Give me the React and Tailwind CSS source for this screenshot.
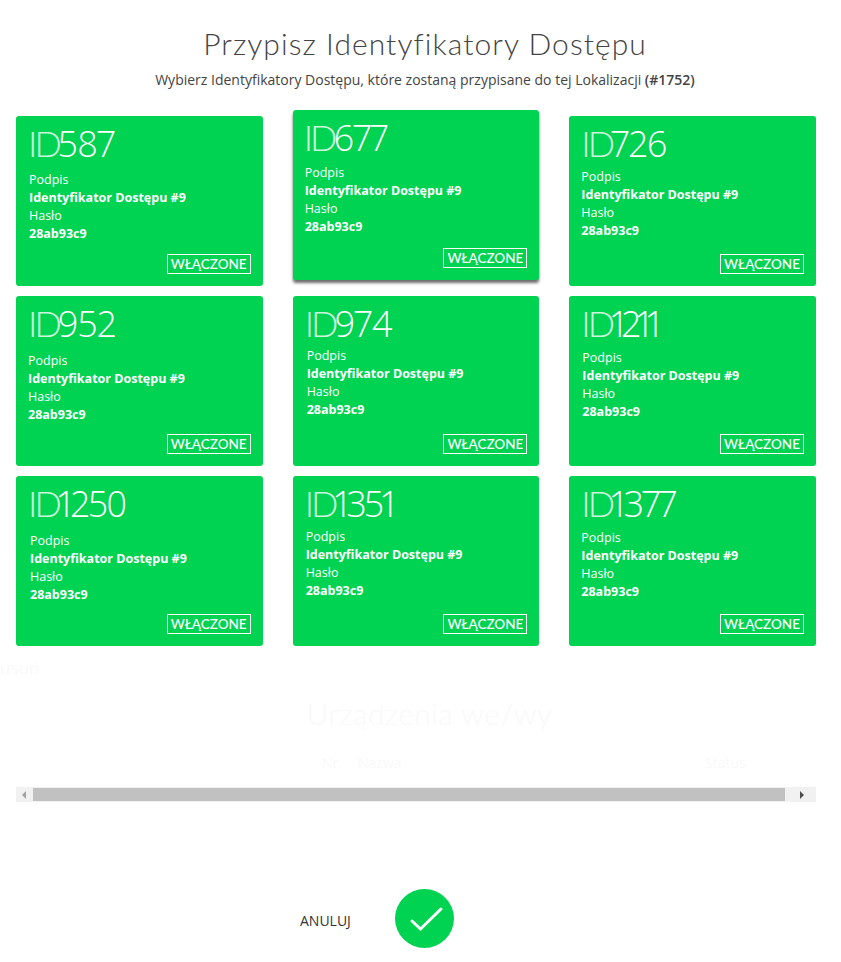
import React from "react";

const cards = [
  { id: "587", bodyCls: "mt-[6px] ml-0", lift: false, numCls: "tracking-[-0.6px]" },
  { id: "677", bodyCls: "mt-[5px] ml-0", lift: true, numCls: "tracking-[-0.8px]" },
  { id: "726", bodyCls: "mt-[3px] -ml-px", lift: false, numCls: "tracking-[-0.8px]" },
  { id: "952", bodyCls: "mt-[7px] -ml-px", lift: false, numCls: "tracking-[-0.4px]" },
  { id: "974", bodyCls: "mt-[2px] ml-px", lift: false, numCls: "tracking-[-0.6px]" },
  { id: "1211", bodyCls: "mt-[4px] ml-0", lift: false, numCls: "tracking-[-4px]" },
  { id: "1250", bodyCls: "mt-[7px] ml-px", lift: false, numCls: "tracking-[-1.6px]" },
  { id: "1351", bodyCls: "mt-[3px] ml-0", lift: false, numCls: "tracking-[-2px]" },
  { id: "1377", bodyCls: "mt-[4px] -ml-px", lift: false, numCls: "tracking-[-1.4px]" },
];

function Card({ id, bodyCls, lift, numCls }) {
  return (
    <div
      className={
        lift
          ? "relative h-[170px] -translate-y-1.5 rounded-[3px] bg-[#00d252] pl-[12px] pt-[5px] text-white shadow-[0_3px_3px_rgba(60,60,60,0.75)]"
          : "relative h-[170px] rounded-[3px] bg-[#00d252] pl-[13px] pt-[5px] text-white"
      }
    >
      <div className="h-[44px] font-['Open_Sans',sans-serif] text-[36px] leading-[44px] font-light proportional-nums">
        <span className="-ml-px inline-block w-[30px] font-['Lato',sans-serif] font-light tracking-[-3px] text-white/80">ID</span>
        <span className={numCls}>{id}</span>
      </div>
      <div className={`font-['Open_Sans',sans-serif] text-[12.5px] leading-[18px] ${bodyCls}`}>
        <div>Podpis</div>
        <div className="font-bold">Identyfikator Dostępu #9</div>
        <div>Hasło</div>
        <div className="font-bold">28ab93c9</div>
      </div>
      <div className="absolute right-3 bottom-3 flex h-5 w-[84px] items-center justify-center border border-white pt-px font-['Lato',sans-serif] text-[13.5px] font-medium">
        WŁĄCZONE
      </div>
    </div>
  );
}

export default function App() {
  return (
    <div className="h-[962px] w-[841px] overflow-hidden bg-white font-['Open_Sans',sans-serif] text-[#333]">
      <header className="flex h-[116px] w-[850px] flex-col items-center pt-[22px]">
        <h1 className="h-[42px] font-['Lato',sans-serif] text-[30px] leading-[42px] font-light tracking-[1.05px] text-[#444]">
          Przypisz Identyfikatory Dostępu
        </h1>
        <p className="mt-[6px] text-[14px] leading-[20px] text-[#444]">
          Wybierz Identyfikatory Dostępu, które zostaną przypisane do tej Lokalizacji <strong className="font-semibold">(#1752)</strong>
        </p>
      </header>

      <main className="ml-4 grid w-[800px] grid-cols-3 gap-x-[30px] gap-y-[10px]">
        {cards.map((c) => (
          <Card key={c.id} {...c} />
        ))}
      </main>

      <section className="text-[#f9f9f9]">
        <div className="mt-[12px] h-[20px] text-[17px] leading-[20px]">usuń</div>
        <h2 className="mt-[15px] ml-[18px] h-[40px] text-center font-['Lato',sans-serif] text-[30px] leading-[40px] font-light tracking-[0.4px]">
          Urządzenia we/wy
        </h2>
        <div className="mt-[20px] flex h-[20px] pl-[322px] text-[14px] leading-[20px]">
          <span className="w-[36px]">Nr</span>
          <span className="w-[347px]">Nazwa</span>
          <span>Status</span>
        </div>
      </section>

      <div className="mt-[14px] ml-4 flex h-[15px] w-[800px] items-center bg-[#f1f1f1]">
        <div className="flex h-full w-[17px] items-center justify-center">
          <svg width="5" height="8" viewBox="0 0 5 8"><path d="M4 0v8L0 4z" fill="#a3a3a3" /></svg>
        </div>
        <div className="h-[13px] w-[752px] bg-[#c1c1c1]" />
        <div className="flex h-full flex-1 items-center justify-center pl-px">
          <svg width="5" height="8" viewBox="0 0 5 8"><path d="M1 0v8l4-4z" fill="#505050" /></svg>
        </div>
      </div>

      <footer className="mt-[87px] ml-[300px] flex items-center">
        <span className="mt-[5px] w-[95px] text-[14px] leading-[20px] text-[#333]">ANULUJ</span>
        <button className="flex h-[59px] w-[59px] items-center justify-center rounded-full bg-[#00d252]">
          <svg width="59" height="59" viewBox="0 0 59 59" fill="none">
            <path d="M17 32l8.5 8L46 20" stroke="#fff" strokeWidth="3" strokeLinecap="round" strokeLinejoin="miter" />
          </svg>
        </button>
      </footer>
    </div>
  );
}
